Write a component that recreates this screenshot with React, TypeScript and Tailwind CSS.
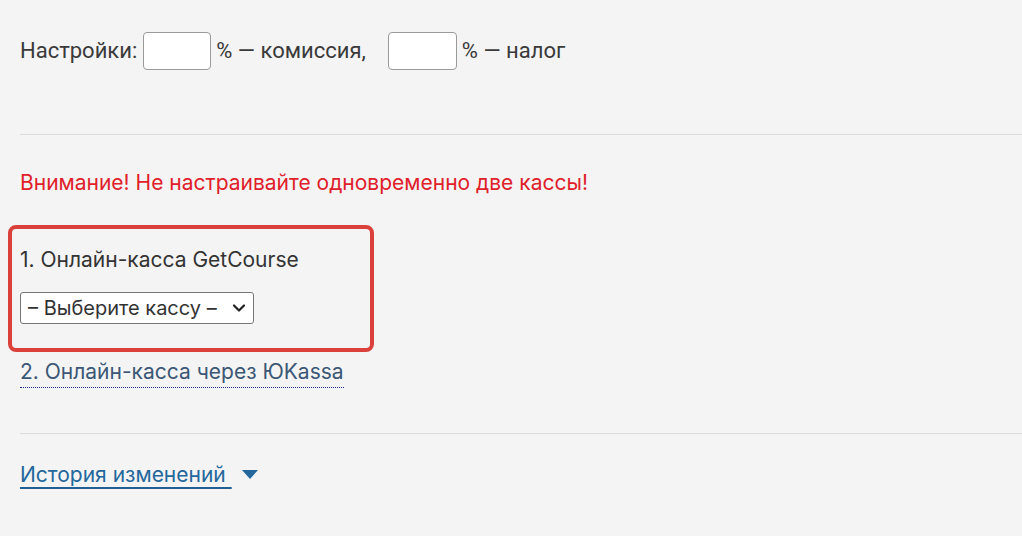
import React from 'react';

const App: React.FC = () => {
  return (
    <div className="min-h-screen bg-[#f4f4f4] pl-5 pt-8 text-[#333] font-['Inter',sans-serif] text-[21px] leading-7">
      <div className="flex items-center h-[38px] font-['Roboto',sans-serif] text-[22px] text-[#3a3a3a]">
        <span>Настройки:</span>
        <input className="ml-[6px] w-[68px] h-[38px] bg-white border border-[#9a9a9a] rounded-[4px]" />
        <span className="ml-[5px]">% — комиссия,</span>
        <input className="ml-[22px] w-[69px] h-[38px] bg-white border border-[#9a9a9a] rounded-[4px]" />
        <span className="ml-[5px]">% — налог</span>
      </div>

      <div className="mt-16 border-t border-[#dcdcdc]" />

      <p className="mt-[34px] text-[#e0202a]">Внимание! Не настраивайте одновременно две кассы!</p>

      <div className="mt-7 -ml-3 w-[366px] border-4 border-[#d9413a] rounded-[8px] pl-2 pt-[17px] pb-6">
        <p className="text-[#333]">1. Онлайн-касса GetCourse</p>
        <div className="mt-[18px] relative inline-flex items-center w-[234px] h-8 bg-white border border-[#777] rounded-[3px]">
          <span className="pl-[7px] text-[20px] text-[#333]">– Выберите кассу –</span>
          <svg className="absolute right-[7px] top-[10px]" width="14" height="10" viewBox="0 0 14 10" fill="none">
            <path d="M2 2.5 L7 7.5 L12 2.5" stroke="#222" strokeWidth="2.2" strokeLinecap="round" strokeLinejoin="round" />
          </svg>
        </div>
      </div>

      <div className="mt-[6px]">
        <a href="#" className="text-[#3b5775] border-b border-dotted border-[#1b2a8a] pb-[3px]">2. Онлайн-касса через ЮKassa</a>
      </div>

      <div className="mt-[47px] border-t border-[#dcdcdc]" />

      <div className="mt-[27px] flex items-center">
        <a href="#" className="text-[#23679c] underline underline-offset-[5px] decoration-2 decoration-[#1f5f94]">История изменений&nbsp;</a>
        <svg className="ml-[10px]" width="16" height="10" viewBox="0 0 16 10">
          <path d="M0 0 H16 L8 9 Z" fill="#23679c" />
        </svg>
      </div>
    </div>
  );
};

export default App;
